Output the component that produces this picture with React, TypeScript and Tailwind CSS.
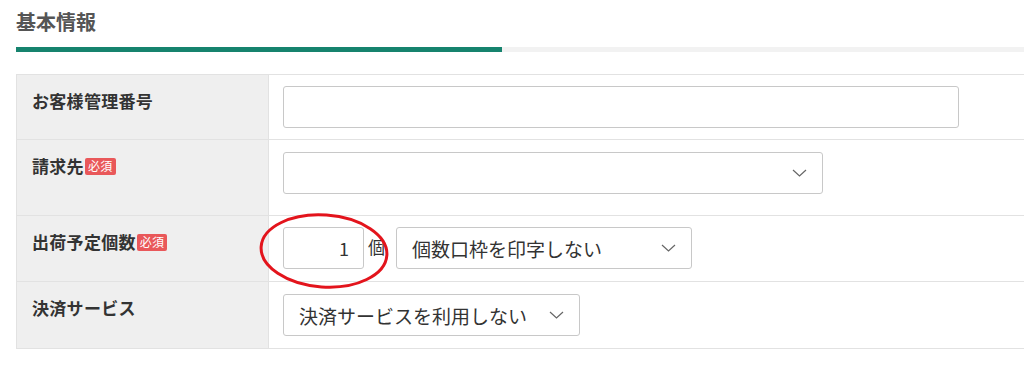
import React from 'react'

const font = { fontFamily: '"Noto Sans CJK JP", "Noto Sans", sans-serif' }

function Chevron() {
  return (
    <svg width="15" height="8" viewBox="0 0 15 8" className="shrink-0">
      <path d="M1 1 L7.5 7 L14 1" fill="none" stroke="#666" strokeWidth="1.2" />
    </svg>
  )
}

function Badge() {
  return (
    <span className="ml-[1px] inline-flex h-[17px] items-center rounded-[2px] bg-[#e9585a] px-[3px] text-[12px] font-normal leading-none text-white">
      必須
    </span>
  )
}

function Label({ text, required }: { text: string; required?: boolean }) {
  return (
    <div className="flex w-[252px] shrink-0 items-start border-r border-[#e2e2e2] bg-[#efefef] pl-[15px] pt-[13px]">
      <span className="flex items-center text-[17px] font-bold leading-[26px] tracking-[0.3px] text-[#333]">
        {text}
        {required && <Badge />}
      </span>
    </div>
  )
}

function Select({ value, width }: { value: string; width: string }) {
  return (
    <div
      className={`flex h-[42px] items-center justify-between rounded-[3px] border border-[#c8c8c8] bg-white pl-[15px] pr-[15px] ${width}`}
    >
      <span className="text-[19px] leading-none text-[#333]">{value}</span>
      <Chevron />
    </div>
  )
}

export default function App() {
  return (
    <div className="relative h-[372px] w-[1024px] overflow-hidden bg-white" style={font}>
      {/* Section title */}
      <div className="px-4 pt-[7px]">
        <h2 className="text-[20px] font-bold leading-[29px] text-[#555]">基本情報</h2>
      </div>
      <div className="mt-[11px] ml-4 flex h-[5px]">
        <div className="w-[486px] bg-[#16836e]" />
        <div className="flex-1 bg-[#f2f2f2]" />
      </div>

      {/* Form table */}
      <div className="mt-[22px] ml-4 w-[1040px] border border-[#e2e2e2] text-[#333]">
        <div className="flex h-[65px] border-b border-[#e2e2e2]">
          <Label text="お客様管理番号" />
          <div className="flex-1 pl-[14px] pt-[11px]">
            <div className="h-[42px] w-[676px] rounded-[3px] border border-[#c8c8c8] bg-white" />
          </div>
        </div>

        <div className="flex h-[76px] border-b border-[#e2e2e2]">
          <Label text="請求先" required />
          <div className="flex-1 pl-[14px] pt-[12px]">
            <Select value="" width="w-[540px]" />
          </div>
        </div>

        <div className="flex h-[66px] border-b border-[#e2e2e2]">
          <Label text="出荷予定個数" required />
          <div className="flex flex-1 items-start pl-[14px] pt-[11px]">
            <div className="flex h-[42px] w-[81px] items-center justify-end rounded-[3px] border border-[#c8c8c8] bg-white pr-[14px] text-[18px] text-[#333]">
              1
            </div>
            <span className="ml-[4px] mt-[7px] text-[17px] leading-[26px] text-[#333]">個</span>
            <div className="ml-[11px]">
              <Select value="個数口枠を印字しない" width="w-[296px]" />
            </div>
          </div>
        </div>

        <div className="flex h-[66px]">
          <Label text="決済サービス" />
          <div className="flex-1 pl-[14px] pt-[12px]">
            <Select value="決済サービスを利用しない" width="w-[297px]" />
          </div>
        </div>
      </div>

      {/* Red annotation circle */}
      <svg className="pointer-events-none absolute left-0 top-0" width="1024" height="372">
        <ellipse
          cx="324"
          cy="251"
          rx="63"
          ry="36"
          transform="rotate(4 324 251)"
          fill="none"
          stroke="#e3141c"
          strokeWidth="3"
        />
      </svg>
    </div>
  )
}
